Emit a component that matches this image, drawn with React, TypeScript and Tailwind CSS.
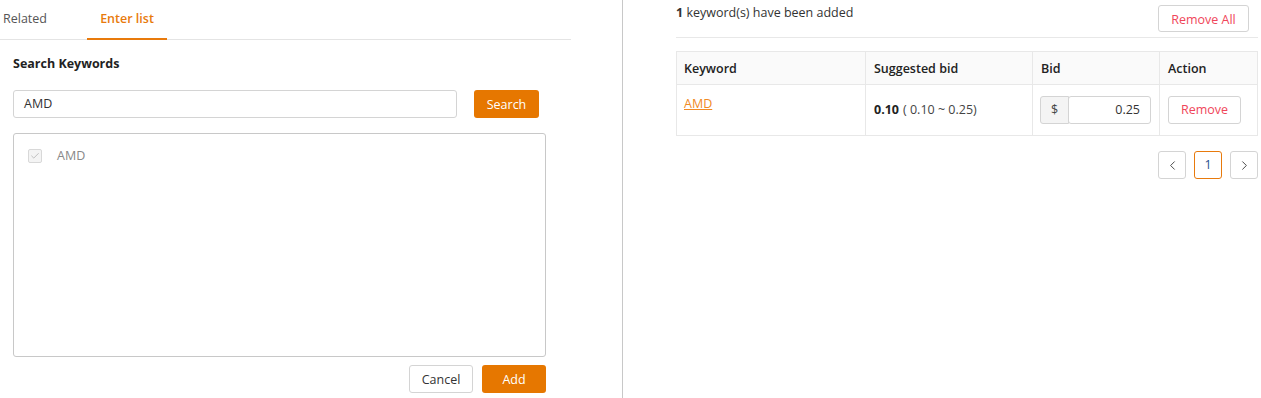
import { ChevronLeft, ChevronRight, Check } from 'lucide-react';

function App() {
  return (
    <div className="w-[1261px] h-[398px] bg-white flex text-[12.5px] text-[#333]" style={{ fontFamily: '"Open Sans", "Noto Sans", sans-serif' }}>
      {/* Left panel */}
      <div className="w-[623px] shrink-0 border-r border-[#c8c8c8] flex flex-col">
        <div className="w-[571px] h-[40px] border-b border-[#e4e4e4] flex items-stretch">
          <div className="w-[87px] pl-[3px] flex items-center text-[#555]">Related</div>
          <div className="w-[80px] flex items-center justify-center font-semibold text-[#e87a0c] border-b-2 border-[#e87a0c] -mb-[1px]">Enter list</div>
        </div>
        <div className="pl-[13px] pt-[15px] font-bold text-[#222] leading-[18px]">Search Keywords</div>
        <div className="pl-[13px] pt-[17px] flex items-center">
          <div className="w-[444px] h-[28px] border border-[#d4d4d4] rounded-[3px] flex items-center pl-[10px] text-[#333]">AMD</div>
          <button className="ml-[17px] w-[65px] h-[28px] rounded-[3px] bg-[#e67700] text-white leading-[30px]">Search</button>
        </div>
        <div className="ml-[13px] mt-[15px] w-[533px] h-[224px] border border-[#c8c8c8] rounded-[3px] pl-[14px] pt-[13px]">
          <div className="flex items-center">
            <span className="w-[14px] h-[14px] border border-[#d8d8d8] rounded-[2px] bg-[#f4f4f4] flex items-center justify-center">
              <Check size={10} strokeWidth={2} className="text-[#b5b5b5]" />
            </span>
            <span className="ml-[15px] text-[#888]">AMD</span>
          </div>
        </div>
        <div className="w-[546px] pt-[8px] flex justify-end gap-[9px]">
          <button className="w-[64px] h-[28px] border border-[#d4d4d4] rounded-[3px] bg-white text-[#333] leading-[28px]">Cancel</button>
          <button className="w-[64px] h-[28px] rounded-[3px] bg-[#e67700] text-white leading-[30px]">Add</button>
        </div>
      </div>

      {/* Right panel */}
      <div className="pl-[53px] flex-1 pr-[3px]">
        <div className="h-[38px] border-b border-[#e8e8e8] flex items-start justify-between pr-[9px]">
          <div className="pt-[4px]"><span className="font-bold">1</span> keyword(s) have been added</div>
          <button className="mt-[5px] w-[91px] h-[27px] border border-[#d4d4d4] rounded-[3px] text-[#f0465a] leading-[28px]">Remove All</button>
        </div>
        <div className="mt-[13px] border border-[#e8e8e8]">
          <div className="grid grid-cols-[189px_167px_127px_1fr] h-[33px] bg-[#fafafa] border-b border-[#e8e8e8] font-semibold text-[#222] leading-[34px]">
            <div className="pl-[7px] border-r border-[#e8e8e8]">Keyword</div>
            <div className="pl-[8px] border-r border-[#e8e8e8]">Suggested bid</div>
            <div className="pl-[8px] border-r border-[#e8e8e8]">Bid</div>
            <div className="pl-[8px]">Action</div>
          </div>
          <div className="grid grid-cols-[189px_167px_127px_1fr] h-[50px]">
            <div className="pl-[7px] pt-[10px] border-r border-[#e8e8e8]">
              <span className="text-[#f08a24] underline">AMD</span>
            </div>
            <div className="pl-[8px] flex items-center border-r border-[#e8e8e8]">
              <span className="font-bold text-[#222]">0.10</span>
              <span className="ml-[4px] text-[#444]">( 0.10 ~ 0.25)</span>
            </div>
            <div className="pl-[7px] flex items-center border-r border-[#e8e8e8]">
              <div className="w-[29px] h-[28px] border border-[#d4d4d4] bg-[#f4f4f4] rounded-l-[3px] flex items-center justify-center text-[#444]">$</div>
              <div className="w-[83px] h-[28px] border border-[#d4d4d4] -ml-[1px] rounded-[3px] bg-white flex items-center justify-end pr-[10px] text-[#333]">0.25</div>
            </div>
            <div className="pl-[8px] flex items-center">
              <button className="w-[73px] h-[28px] border border-[#d4d4d4] rounded-[3px] text-[#f0465a]">Remove</button>
            </div>
          </div>
        </div>
        <div className="mt-[15px] flex justify-end gap-[8px]">
          <button className="w-[28px] h-[28px] border border-[#d4d4d4] rounded-[3px] flex items-center justify-center text-[#333]">
            <ChevronLeft size={15} strokeWidth={1.4} />
          </button>
          <button className="w-[28px] h-[28px] border border-[#e87a0c] rounded-[3px] flex items-center justify-center text-[#1f4f8f]">1</button>
          <button className="w-[28px] h-[28px] border border-[#d4d4d4] rounded-[3px] flex items-center justify-center text-[#333]">
            <ChevronRight size={15} strokeWidth={1.4} />
          </button>
        </div>
      </div>
    </div>
  );
}

export default App;
